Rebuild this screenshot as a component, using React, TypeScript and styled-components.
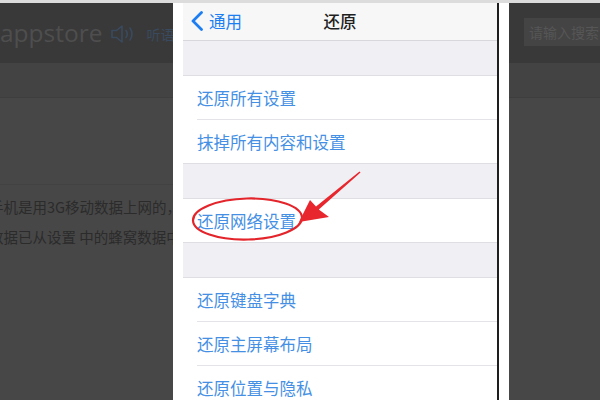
import * as React from "react";
import styled, { createGlobalStyle } from "styled-components";

const GlobalStyle = createGlobalStyle`
  html, body {
    margin: 0;
    padding: 0;
    background: #ffffff;
  }
  body {
    font-family: "Noto Sans CJK SC", "Noto Sans", sans-serif;
  }
`;

const SPage = styled.div`
  width: 600px;
  height: 400px;
  display: flex;
  flex-direction: column;
  overflow: hidden;
  background: #ffffff;
`;

const STopStrip = styled.div`
  height: 3px;
  flex-shrink: 0;
  background: #dcdcdc;
`;

const SStage = styled.div`
  flex: 1;
  display: flex;
  min-height: 0;
`;

const SSidePane = styled.div<{ width?: number }>`
  ${(p) => (p.width ? `width: ${p.width}px; flex-shrink: 0;` : "flex: 1;")}
  display: flex;
  flex-direction: column;
  overflow: hidden;
  background: #474747;
`;

const SSiteHeader = styled.div`
  height: 60px;
  flex-shrink: 0;
  display: flex;
  align-items: center;
  background: #393939;
  overflow: hidden;
`;

const SSubBar = styled.div`
  height: 34px;
  flex-shrink: 0;
  background: #434343;
  border-bottom: 1px solid #3e3e3e;
`;

const SBody = styled.div`
  flex: 1;
  display: flex;
  flex-direction: column;
`;

const SBodyDivider = styled.div`
  margin-top: 86px;
  height: 1px;
  background: #424242;
`;

const SParagraph = styled.div`
  margin-left: -11px;
  padding-top: 7px;
  font-family: "Noto Sans CJK SC", sans-serif;
  font-size: 14.5px;
  line-height: 30px;
  color: #2b2b2b;
`;

const SLine = styled.div`
  white-space: nowrap;
`;

const SLogo = styled.div`
  font-family: "Open Sans", "Liberation Sans", sans-serif;
  font-size: 24.5px;
  color: #4e4e4e;
  white-space: nowrap;
  margin-top: -1px;
`;

const SListen = styled.div`
  display: flex;
  align-items: center;
  gap: 9px;
  margin-left: 7px;
  margin-top: 2px;
  color: #3a4a5e;
  font-size: 14px;
  white-space: nowrap;
`;

const SSearch = styled.div`
  margin-left: 15px;
  margin-top: -2px;
  height: 28px;
  width: 110px;
  flex-shrink: 0;
  display: flex;
  align-items: center;
  padding-left: 5px;
  background: #444444;
  color: #565656;
  font-size: 14px;
  white-space: nowrap;
`;

const SGutter = styled.div`
  width: 10px;
  flex-shrink: 0;
  background: #ffffff;
`;

const SPhoneEdge = styled.div`
  width: 2px;
  flex-shrink: 0;
  background: #1e1e1e;
`;

const SPhone = styled.div`
  position: relative;
  width: 314px;
  flex-shrink: 0;
  display: flex;
  flex-direction: column;
  background: #efeff4;
  overflow: hidden;
`;

const SNavBar = styled.div`
  height: 38px;
  flex-shrink: 0;
  display: grid;
  grid-template-columns: 1fr auto 1fr;
  align-items: center;
  padding-bottom: 2px;
  box-sizing: border-box;
  background: #f7f7f7;
  border-bottom: 1px solid #d7d7dc;
`;

const SBack = styled.div`
  display: flex;
  align-items: center;
  gap: 6px;
  padding-left: 8px;
  color: #1d7ef2;
  font-size: 16.5px;
`;

const STitle = styled.div`
  color: #1f1f1f;
  font-size: 16.5px;
  font-weight: 500;
`;

const SGroupGap = styled.div`
  height: 34px;
  flex-shrink: 0;
`;

const SGroup = styled.div`
  flex-shrink: 0;
  background: #ffffff;
  border-top: 1px solid #dedee3;
  border-bottom: 1px solid #dedee3;
`;

const SRow = styled.div`
  height: 43px;
  margin-left: 14px;
  display: flex;
  align-items: center;
  color: #4590e4;
  font-size: 16.5px;
  & + & {
    border-top: 1px solid #e3e3e8;
  }
`;

const SAnnotation = styled.svg`
  position: absolute;
  left: 0;
  top: 0;
  width: 314px;
  height: 397px;
  pointer-events: none;
`;

const Speaker = () => (
  <svg width="28" height="20" viewBox="0 0 28 20" fill="none">
    <path
      d="M2 6.5h4.5L12 2v16l-5.5-4.5H2z"
      stroke="#3a4a5e"
      strokeWidth="1.6"
      strokeLinejoin="round"
    />
    <path d="M16 6.5q2.5 3.5 0 7" stroke="#3a4a5e" strokeWidth="1.6" strokeLinecap="round" />
    <path d="M20 4q4 6 0 12" stroke="#3a4a5e" strokeWidth="1.6" strokeLinecap="round" />
  </svg>
);

const Chevron = () => (
  <svg width="12" height="20" viewBox="0 0 12 20" fill="none">
    <path
      d="M10.5 1.5L2 10l8.5 8.5"
      stroke="#1d7ef2"
      strokeWidth="2.8"
      strokeLinecap="round"
      strokeLinejoin="round"
    />
  </svg>
);

const groups: string[][] = [
  ["还原所有设置", "抹掉所有内容和设置"],
  ["还原网络设置"],
  ["还原键盘字典", "还原主屏幕布局", "还原位置与隐私"],
];

const App = () => {
  return (
    <>
      <GlobalStyle />
      <SPage>
        <STopStrip />
        <SStage>
          <SSidePane width={173}>
            <SSiteHeader>
              <SLogo>appstore</SLogo>
              <SListen>
                <Speaker />
                <span>听语音</span>
              </SListen>
            </SSiteHeader>
            <SSubBar />
            <SBody>
              <SBodyDivider />
              <SParagraph>
                <SLine>{"手机是用3G移动数据上网的，请确认"}</SLine>
                <SLine>{"数据已从设置 中的蜂窝数据中打开"}</SLine>
              </SParagraph>
            </SBody>
          </SSidePane>
          <SGutter />
          <SPhone>
            <SNavBar>
              <SBack>
                <Chevron />
                <span>通用</span>
              </SBack>
              <STitle>还原</STitle>
              <div />
            </SNavBar>
            {groups.map((items, i) => (
              <React.Fragment key={i}>
                <SGroupGap />
                <SGroup>
                  {items.map((label) => (
                    <SRow key={label}>{label}</SRow>
                  ))}
                </SGroup>
              </React.Fragment>
            ))}
            <SAnnotation viewBox="0 0 314 397">
              <ellipse
                cx="64.5"
                cy="216"
                rx="54.5"
                ry="20.5"
                fill="none"
                stroke="#e3242b"
                strokeWidth="2.2"
                transform="rotate(-1.5 64.5 216)"
              />
              <polygon
                points="116,219 127,197 133,203.4 176.5,168.6 177.5,169.4 135.8,206.6 146,214"
                fill="#e8262d"
              />
            </SAnnotation>
          </SPhone>
          <SPhoneEdge />
          <SGutter />
          <SSidePane>
            <SSiteHeader>
              <SSearch>请输入搜索内容</SSearch>
            </SSiteHeader>
            <SSubBar />
            <SBody />
          </SSidePane>
        </SStage>
      </SPage>
    </>
  );
};

export default App;
